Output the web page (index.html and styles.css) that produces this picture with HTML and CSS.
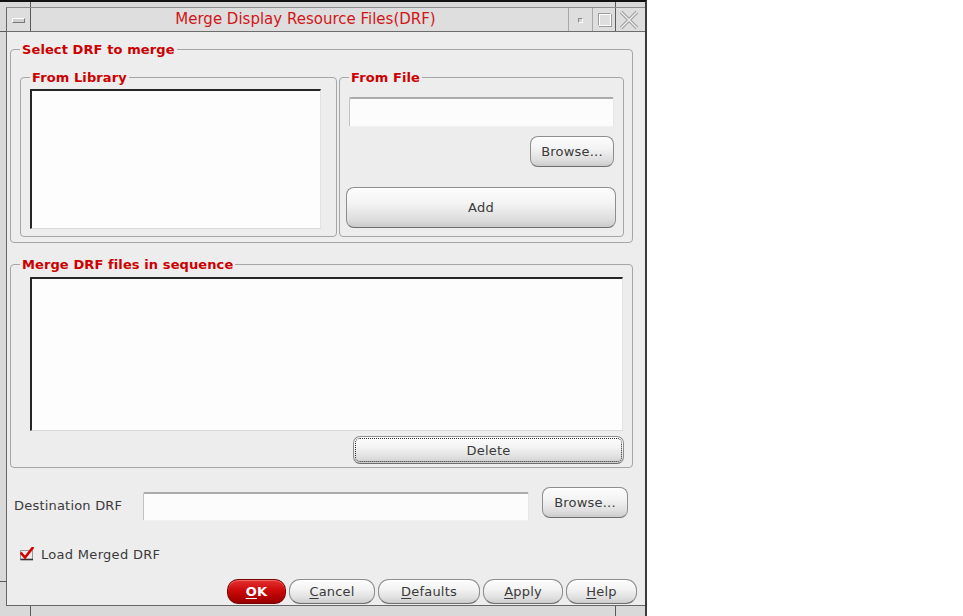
FILE: index.html
```html
<!DOCTYPE html>
<html>
<head>
<meta charset="utf-8">
<title>Merge Display Resource Files(DRF)</title>
<link rel="stylesheet" href="styles.css">
</head>
<body>
<div class="window">
  <div class="inner">
    <div class="titlebar">
      <div class="tb-menu"><span class="menu-bar"></span></div>
      <div class="tb-title">Merge Display Resource Files(DRF)</div>
      <div class="tb-btn tb-min"><span class="min-sq"></span></div>
      <div class="tb-btn tb-max"><span class="max-sq"></span></div>
      <div class="tb-btn tb-close">
        <svg width="24" height="23" viewBox="0 0 24 23">
          <path d="M5 4 L21 20 M21 4 L5 20" stroke="#9c9c9c" stroke-width="3.4" fill="none"/>
          <path d="M5 4 L21 20 M21 4 L5 20" stroke="#f2f2f2" stroke-width="1.3" fill="none"/>
        </svg>
      </div>
    </div>
    <div class="client">
      <fieldset class="group group-select">
        <legend>Select DRF to merge</legend>
        <div class="select-row">
          <fieldset class="sub sub-lib">
            <legend>From Library</legend>
            <div class="listbox lib-list"></div>
          </fieldset>
          <fieldset class="sub sub-file">
            <legend>From File</legend>
            <div class="file-col">
              <div class="textfield file-field"></div>
              <button class="btn browse1">Browse...</button>
              <button class="btn add-btn">Add</button>
            </div>
          </fieldset>
        </div>
      </fieldset>
      <fieldset class="group group-seq">
        <legend>Merge DRF files in sequence</legend>
        <div class="seq-col">
          <div class="listbox seq-list"></div>
          <button class="btn delete-btn">Delete</button>
        </div>
      </fieldset>
      <div class="dest-row">
        <span class="dest-label">Destination DRF</span>
        <div class="textfield dest-field"></div>
        <button class="btn browse2">Browse...</button>
      </div>
      <div class="check-row">
        <svg class="check" width="14" height="14" viewBox="0 0 14 14">
          <rect x="0.5" y="3.5" width="12" height="9" fill="#ececec" stroke="#9a9a9a"/>
          <path d="M0.5 12.5 H13" stroke="#333" stroke-width="1.6"/>
          <path d="M1.5 6.5 L5 10.5 L12.5 1" stroke="#d40000" stroke-width="2.6" fill="none" stroke-linecap="square"/>
        </svg>
        <span class="check-label">Load Merged DRF</span>
      </div>
      <div class="actions">
        <button class="btn pill ok"><u>O</u>K</button>
        <button class="btn pill cancel"><u>C</u>ancel</button>
        <button class="btn pill defaults"><u>D</u>efaults</button>
        <button class="btn pill apply"><u>A</u>pply</button>
        <button class="btn pill help"><u>H</u>elp</button>
      </div>
    </div>
  </div>
</div>
</body>
</html>
```
FILE: styles.css
```css
body {
  margin: 0;
  background: #ffffff;
  font-family: "DejaVu Sans", "Liberation Sans", sans-serif;
}

.window {
  width: 647px;
  height: 616px;
  box-sizing: border-box;
  border-top: 2px solid #111;
  border-right: 2px solid #3c3c3c;
  padding: 5px 0 10px 6px;
  background-color: #d9d9d9;
  background-image:
    linear-gradient(#5a5a5a, #5a5a5a),
    linear-gradient(#5a5a5a, #5a5a5a),
    linear-gradient(#5a5a5a, #5a5a5a),
    linear-gradient(#5a5a5a, #5a5a5a),
    linear-gradient(#5a5a5a, #5a5a5a),
    linear-gradient(#5a5a5a, #5a5a5a);
  background-repeat: no-repeat;
  background-position:
    30px 0, 615px 0, 0 29px, 0 579px, 30px 604px, 615px 604px;
  background-size:
    1px 29px, 1px 29px, 6px 1px, 6px 1px, 1px 10px, 1px 10px;
  display: flex;
  flex-direction: column;
}

.inner {
  flex: 1;
  display: flex;
  flex-direction: column;
  border-left: 1px solid #676767;
  border-top: 1px solid #8c8c8c;
  border-bottom: 1px solid #676767;
  background: #ededed;
}

/* title bar */
.titlebar {
  height: 23px;
  display: flex;
  padding-right: 5px;
  background: #dedede;
  border-bottom: 1px solid #6c6c6c;
}
.tb-menu {
  width: 23px;
  border-right: 1px solid #5a5a5a;
  display: flex;
  align-items: center;
  justify-content: center;
}
.menu-bar {
  width: 11px;
  height: 3px;
  background: #d0d0d0;
  border: 1px solid;
  border-color: #ffffff #7a7a7a #7a7a7a #ffffff;
  margin-top: 1px;
}
.tb-title {
  flex: 1;
  padding-left: 12px;
  text-align: center;
  color: #d01616;
  font-size: 15px;
  line-height: 23px;
  white-space: nowrap;
}
.tb-btn {
  border-left: 1px solid #a8a8a8;
  display: flex;
  align-items: center;
  justify-content: center;
}
.tb-min { width: 23px; }
.tb-max { width: 22px; }
.tb-close { width: 24px; border-left-color: #5a5a5a; }
.min-sq {
  width: 3px;
  height: 3px;
  background: #d4d4d4;
  border: 1px solid;
  border-color: #8a8a8a #ffffff #ffffff #8a8a8a;
  margin-top: 1px;
}
.max-sq {
  width: 11px;
  height: 11px;
  border: 1px solid;
  border-color: #9a9a9a #ffffff #ffffff #9a9a9a;
  box-shadow: 1px 1px 0 #9a9a9a, inset 1px 1px 0 #ffffff;
}

/* client */
.client {
  flex: 1;
  display: flex;
  flex-direction: column;
  align-items: flex-start;
  color: #3a3a3a;
  font-size: 13px;
}

fieldset {
  margin: 0;
  min-inline-size: 0;
  border: 1px solid #a6a6a6;
  border-radius: 4px;
  box-sizing: border-box;
}
legend {
  padding: 0 2px;
  font-weight: bold;
  font-size: 13px;
  line-height: 15px;
  color: #cc0000;
  letter-spacing: 0.1px;
}

.group {
  margin-left: 3px;
  width: 623px;
}
.group-select {
  margin-top: 10px;
  padding: 13px 8px 5px 9px;
}
.select-row {
  display: flex;
}
.sub-lib {
  width: 317px;
  padding: 4px 0 7px 9px;
}
.sub-file {
  width: 285px;
  margin-left: 2px;
  padding: 12px 0 8px 9px;
}
.file-col {
  display: flex;
  flex-direction: column;
  align-items: flex-start;
}

.listbox {
  box-sizing: border-box;
  background: #fdfdfd;
  border-top: 2px solid #262626;
  border-left: 2px solid #262626;
  border-right: 1px solid #e2e2e2;
  border-bottom: 1px solid #dadada;
}
.lib-list {
  width: 291px;
  height: 140px;
}

.textfield {
  box-sizing: border-box;
  background: #fcfcfc;
  border-top: 2px solid #ababab;
  border-left: 1px solid #c2c2c2;
  border-right: 1px solid #e6e6e6;
  border-bottom: 1px solid #f2f2f2;
  border-radius: 2px;
}
.file-field {
  width: 265px;
  height: 30px;
}

.btn {
  box-sizing: border-box;
  padding: 0;
  font-family: "DejaVu Sans", "Liberation Sans", sans-serif;
  font-size: 13px;
  letter-spacing: 0.2px;
  color: #3a3a3a;
  border: 1px solid #8e8e8e;
  border-bottom-color: #6e6e6e;
  border-radius: 8px;
  background: linear-gradient(to bottom, #fdfdfd 0%, #f3f3f3 40%, #dedede 80%, #cbcbcb 100%);
  box-shadow: inset 0 1px 0 #ffffff;
}
.btn u {
  text-decoration: underline;
  text-underline-offset: 2px;
}
.browse1 {
  width: 84px;
  height: 31px;
  margin-top: 9px;
  align-self: flex-end;
  margin-right: 9px;
}
.add-btn {
  width: 270px;
  height: 41px;
  margin-top: 20px;
  margin-left: -3px;
}

.group-seq {
  margin-top: 14px;
  padding: 5px 0 3px 9px;
}
.seq-col {
  display: flex;
  flex-direction: column;
  align-items: flex-start;
}
.seq-list {
  width: 593px;
  height: 154px;
  margin-left: 10px;
}
.delete-btn {
  width: 271px;
  height: 28px;
  margin-top: 5px;
  margin-left: 333px;
  border-radius: 7px;
  outline: 1px dotted #2a2a2a;
  outline-offset: -3px;
}

.dest-row {
  margin-top: 19px;
  padding-left: 7px;
  display: flex;
  align-items: flex-start;
}
.dest-label {
  width: 129px;
  margin-top: 12px;
  line-height: 14px;
  letter-spacing: 0.2px;
}
.dest-field {
  width: 386px;
  height: 29px;
  margin-top: 5px;
}
.browse2 {
  width: 86px;
  height: 31px;
  margin-left: 13px;
}

.check-row {
  margin-top: 26px;
  padding-left: 13px;
  height: 14px;
  display: flex;
  align-items: center;
}
.check {
  display: block;
}
.check-label {
  margin-left: 7px;
  line-height: 14px;
  letter-spacing: 0.3px;
  margin-top: 2px;
}

.actions {
  align-self: stretch;
  margin-top: 18px;
  padding-right: 8px;
  display: flex;
  justify-content: flex-end;
  gap: 3px;
}
.pill {
  height: 25px;
  border-radius: 11px;
}
.ok {
  width: 59px;
  color: #ffffff;
  font-weight: bold;
  border-color: #7c0000;
  background: linear-gradient(to bottom, #e43030 0%, #cc0a0a 45%, #a80000 85%, #920000 100%);
  box-shadow: inset 0 1px 0 #f06a6a;
}
.cancel { width: 86px; }
.defaults { width: 102px; }
.apply { width: 80px; }
.help { width: 71px; }
```
